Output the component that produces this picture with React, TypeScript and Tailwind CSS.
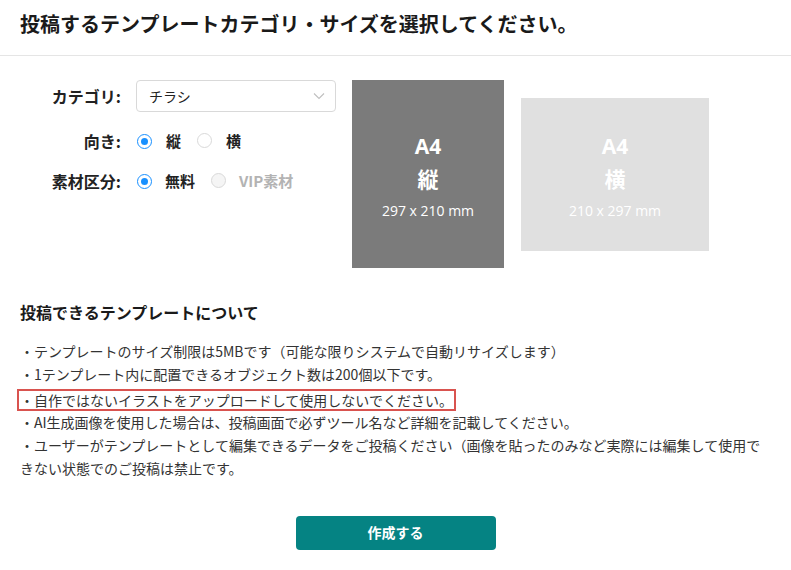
import React from "react";

const font = { fontFamily: '"Noto Sans CJK JP", "Noto Sans", sans-serif' };

function Radio({ checked, disabled }: { checked?: boolean; disabled?: boolean }) {
  if (disabled) {
    return <span className="inline-block h-[15px] w-[15px] rounded-full border border-[#d9d9d9] bg-[#f5f5f5]" />;
  }
  if (checked) {
    return (
      <span className="flex h-[15px] w-[15px] items-center justify-center rounded-full border border-[#1890ff] bg-white">
        <span className="h-[7px] w-[7px] rounded-full bg-[#1890ff]" />
      </span>
    );
  }
  return <span className="inline-block h-[15px] w-[15px] rounded-full border border-[#d9d9d9] bg-white" />;
}

export default function App() {
  return (
    <div className="h-[570px] w-[791px] overflow-hidden bg-white text-[#222]" style={font}>
      <div className="h-[56px] border-b border-[#e5e5e5] pl-5 pt-[10px]">
        <h1 className="text-[20px] font-bold leading-[28px] text-[#1a1a1a]">
          投稿するテンプレートカテゴリ・サイズを選択してください。
        </h1>
      </div>

      <div className="mt-[24px] flex items-center pl-5">
        <div className="flex flex-col gap-[18px] self-start">
          <div className="flex h-8 items-center">
            <div className="w-[101px] text-right text-[16px] font-bold">カテゴリ:</div>
            <div className="ml-[15px] flex h-8 w-[200px] items-center justify-between rounded-[4px] border border-[#d9d9d9] pl-3 pr-[10px]">
              <span className="text-[14px]">チラシ</span>
              <svg width="12" height="8" viewBox="0 0 12 8" fill="none">
                <path d="M1 1.5 L6 6.5 L11 1.5" stroke="#bfbfbf" strokeWidth="1.1" />
              </svg>
            </div>
          </div>
          <div className="flex h-[22px] items-center">
            <div className="w-[101px] text-right text-[16px] font-bold">向き:</div>
            <div className="ml-4 flex items-center">
              <Radio checked />
              <span className="ml-[14px] text-[15px] font-bold">縦</span>
              <span className="ml-[16px]"><Radio /></span>
              <span className="ml-[14px] text-[15px] font-bold">横</span>
            </div>
          </div>
          <div className="flex h-[22px] items-center">
            <div className="w-[101px] text-right text-[16px] font-bold">素材区分:</div>
            <div className="ml-4 flex items-center">
              <Radio checked />
              <span className="ml-[13px] text-[15px] font-bold">無料</span>
              <span className="ml-[16px]"><Radio disabled /></span>
              <span className="ml-[13px] text-[15px] font-bold text-[#b3b3b3]">VIP素材</span>
            </div>
          </div>
        </div>

        <div className="ml-[16px] flex h-[188px] w-[152px] flex-col items-center justify-center bg-[#7b7b7b] pt-1 text-white">
          <div className="text-[21px] font-bold leading-[30px]" style={{ fontFamily: '"Open Sans", "Noto Sans CJK JP", sans-serif' }}>A4</div>
          <div className="mt-[2px] text-[21px] font-bold leading-[30px]">縦</div>
          <div className="mt-[7px] text-[14px] leading-[22px]" style={{ fontFamily: '"Open Sans", sans-serif' }}>297 x 210 mm</div>
        </div>

        <div className="ml-[17px] flex h-[153px] w-[188px] flex-col items-center justify-center bg-[#e0e0e0] pt-1 text-white">
          <div className="text-[21px] font-bold leading-[30px]" style={{ fontFamily: '"Open Sans", "Noto Sans CJK JP", sans-serif' }}>A4</div>
          <div className="mt-[2px] text-[21px] font-bold leading-[30px]">横</div>
          <div className="mt-[7px] text-[14px] leading-[22px]" style={{ fontFamily: '"Open Sans", sans-serif' }}>210 x 297 mm</div>
        </div>
      </div>

      <div className="mt-[32px] pl-5">
        <h2 className="text-[16px] font-bold leading-6 text-[#1a1a1a]">投稿できるテンプレートについて</h2>
        <div className="mt-4 text-[14px] leading-[23px] text-[#333]">
          <div>・テンプレートのサイズ制限は5MBです（可能な限りシステムで自動リサイズします）</div>
          <div>・1テンプレート内に配置できるオブジェクト数は200個以下です。</div>
          <div className="-ml-[3px] mt-[2.5px] w-fit border-2 border-[#d9534f] px-[1px] leading-[18px]">
            ・自作ではないイラストをアップロードして使用しないでください。
          </div>
          <div>・AI生成画像を使用した場合は、投稿画面で必ずツール名など詳細を記載してください。</div>
          <div>
            ・ユーザーがテンプレートとして編集できるデータをご投稿ください（画像を貼ったのみなど実際には編集して使用で
            <br />
            きない状態でのご投稿は禁止です。
          </div>
        </div>
      </div>

      <div className="mt-[36px] flex justify-center">
        <button className="h-[34px] w-[200px] rounded-[4px] bg-[#058383] text-[14px] font-bold text-white">
          作成する
        </button>
      </div>
    </div>
  );
}
